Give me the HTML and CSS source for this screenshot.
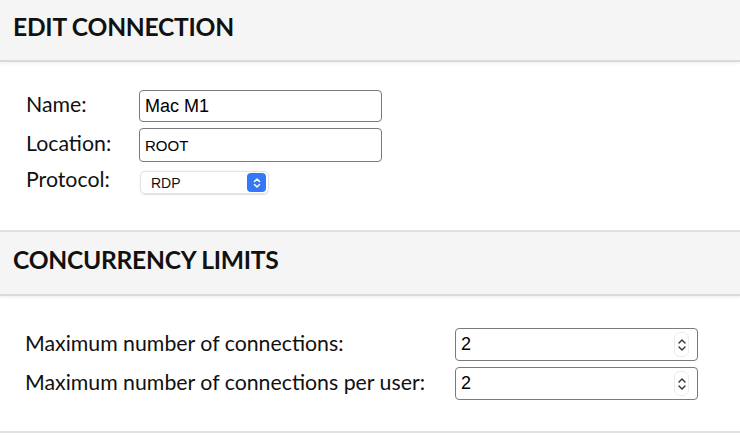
FILE: index.html
```html
<!DOCTYPE html>
<html lang="en">
<head>
    <meta charset="UTF-8">
    <title>Edit Connection</title>
    <link rel="stylesheet" href="styles.css">
</head>
<body>
    <div class="section">
        <div class="header">
            <h2>EDIT CONNECTION</h2>
        </div>
        <div class="properties">
            <div class="label">Name:</div>
            <div class="field"><input type="text" class="text-input name" value="Mac M1"></div>
            <div class="label">Location:</div>
            <div class="field"><input type="text" class="text-input location" value="ROOT"></div>
            <div class="label">Protocol:</div>
            <div class="field">
                <div class="select">
                    <span>RDP</span>
                    <span class="select-button">
                        <svg width="8" height="12" viewBox="0 0 8 12">
                            <path d="M1.5 4.5 L4 2 L6.5 4.5 M1.5 7.5 L4 10 L6.5 7.5" fill="none" stroke="#fff" stroke-width="1.5" stroke-linecap="round" stroke-linejoin="round"/>
                        </svg>
                    </span>
                </div>
            </div>
        </div>
    </div>

    <div class="section limits">
        <div class="header">
            <h2>CONCURRENCY LIMITS</h2>
        </div>
        <div class="properties wide">
            <div class="label">Maximum number of connections:</div>
            <div class="field">
                <div class="number-input">
                    <span>2</span>
                    <span class="spinner">
                        <svg width="10" height="20" viewBox="0 0 10 20">
                            <path d="M2 8 L5 5 L8 8 M2 12 L5 15 L8 12" fill="none" stroke="#333" stroke-width="1.4" stroke-linecap="round" stroke-linejoin="round"/>
                        </svg>
                    </span>
                </div>
            </div>
            <div class="label">Maximum number of connections per user:</div>
            <div class="field">
                <div class="number-input">
                    <span>2</span>
                    <span class="spinner">
                        <svg width="10" height="20" viewBox="0 0 10 20">
                            <path d="M2 8 L5 5 L8 8 M2 12 L5 15 L8 12" fill="none" stroke="#333" stroke-width="1.4" stroke-linecap="round" stroke-linejoin="round"/>
                        </svg>
                    </span>
                </div>
            </div>
        </div>
    </div>
</body>
</html>
```

FILE: styles.css
```css
body {
    margin: 0;
    padding: 0;
    background: #ffffff;
    color: #111;
    font-family: Lato, "Open Sans", sans-serif;
}

.section {
    border-bottom: 2px solid #e2e2e2;
}

.header {
    background-color: #f5f5f5;
    height: 60px;
    border-bottom: 2px solid #dadada;
    box-shadow: 0 1px 3px rgba(0, 0, 0, 0.08);
    display: flex;
    align-items: center;
    padding: 0 13px;
}

.header h2 {
    margin: 0 0 8px 0;
    font-size: 24.6px;
    font-weight: 700;
    letter-spacing: -0.25px;
}

.limits .header {
    height: 62px;
}

.properties {
    display: grid;
    grid-template-columns: 113px 243px;
    align-items: center;
    row-gap: 6px;
    padding: 28px 0 36px 26px;
    font-size: 21.3px;
}

.properties.wide {
    grid-template-columns: 430px 243px;
    padding: 32px 0 31px 25px;
}

.label {
    color: #111;
    line-height: 22px;
    padding-bottom: 4px;
}

.text-input {
    box-sizing: border-box;
    width: 243px;
    height: 32px;
    margin: 0;
    padding: 0 5px;
    border: 1px solid #7a7a7a;
    border-radius: 4px;
    font-family: "Liberation Sans", Arial, sans-serif;
    font-size: 18px;
    color: #000;
    background: #fff;
    outline: none;
}

.text-input.location {
    height: 34px;
    font-size: 15px;
}

.select {
    box-sizing: border-box;
    width: 129px;
    height: 23px;
    margin: 3px 0 0 1px;
    border: 1px solid #e3e3e3;
    border-radius: 5px;
    box-shadow: 0 0.5px 1.5px rgba(0, 0, 0, 0.12);
    display: flex;
    align-items: center;
    justify-content: space-between;
    padding: 0 2px 0 10px;
    font-family: "Liberation Sans", Arial, sans-serif;
    font-size: 14px;
    color: #111;
}

.select-button {
    width: 19px;
    height: 19px;
    border-radius: 4px;
    background-color: #3478f6;
    display: flex;
    align-items: center;
    justify-content: center;
}

.number-input {
    box-sizing: border-box;
    width: 243px;
    height: 33px;
    border: 1px solid #7a7a7a;
    border-radius: 4px;
    display: flex;
    align-items: center;
    justify-content: space-between;
    padding: 0 8px 0 5px;
    font-family: "Liberation Sans", Arial, sans-serif;
    font-size: 18px;
    color: #000;
}

.spinner {
    width: 15px;
    height: 25px;
    border: 1px solid #ececec;
    border-radius: 6px;
    display: flex;
    align-items: center;
    justify-content: center;
    box-sizing: border-box;
}
```
